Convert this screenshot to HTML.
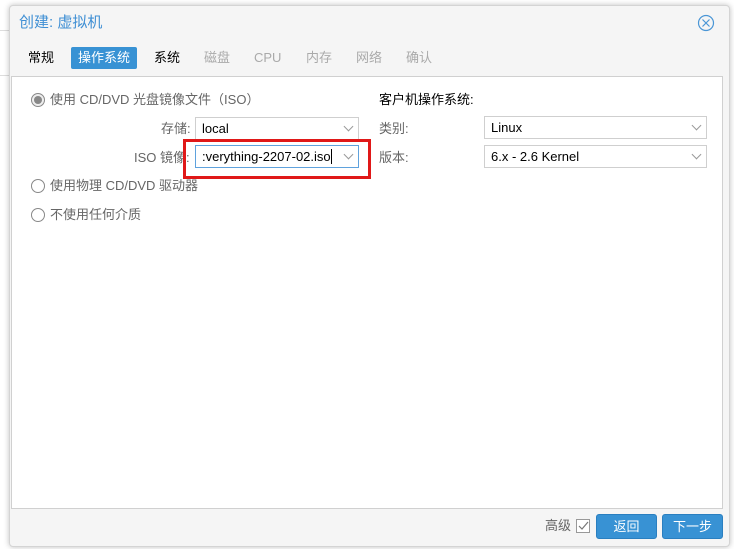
<!DOCTYPE html>
<html><head><meta charset="utf-8"><style>
body{margin:0;width:734px;height:549px;background:#fff;position:relative;overflow:hidden;font-family:"Liberation Sans","Noto Sans CJK SC",sans-serif;font-size:13px;line-height:16px;color:#000}
.a{position:absolute}
.dlg{left:9px;top:5px;width:719px;height:540px;background:#f5f5f5;border:1px solid #d4d4d4;border-radius:4px;box-shadow:0 0 6px rgba(0,0,0,.25)}
.panel{left:11px;top:76px;width:710px;height:431px;background:#fff;border:1px solid #d0d0d0}
.tab{top:50px;font-size:13px}
.inp{height:21px;background:#fff;border:1px solid #cfcfcf;font-size:13px;line-height:21px;padding-left:6px;box-sizing:content-box}
.chev{position:absolute;right:6px;top:5px;width:6px;height:6px;border-right:1px solid #999;border-bottom:1px solid #999;transform:rotate(45deg)}
.lbl{color:#666}
.radio{width:12px;height:12px;border:1px solid #888;border-radius:50%;background:#fff}
.btn{top:514px;height:23px;width:59px;background:#3892d4;border:1px solid #2a7fc0;border-radius:3px;color:#fff;text-align:center;line-height:23px}
</style></head><body>
<div class="a" style="left:0;top:30px;width:9px;height:1px;background:#ddd"></div>
<div class="a" style="left:0;top:75px;width:9px;height:1px;background:#ddd"></div>
<div class="a dlg"></div>
<div class="a" style="left:19px;top:14px;font-size:15px;line-height:18px;color:#3f8fd4">创建: 虚拟机</div>
<svg class="a" style="left:697px;top:14px" width="18" height="18"><circle cx="9" cy="9" r="7.5" fill="none" stroke="#4a96d6" stroke-width="1.2"/><path d="M5.5 5.5L12.5 12.5M12.5 5.5L5.5 12.5" stroke="#4a96d6" stroke-width="1.2"/></svg>
<div class="a tab" style="left:28px">常规</div>
<div class="a" style="left:71px;top:47px;width:66px;height:22px;background:#3892d4;border-radius:2px;color:#fff;text-align:center;line-height:22px">操作系统</div>
<div class="a tab" style="left:154px">系统</div>
<div class="a tab" style="left:204px;color:#aaa">磁盘</div>
<div class="a tab" style="left:254px;color:#aaa">CPU</div>
<div class="a tab" style="left:306px;color:#aaa">内存</div>
<div class="a tab" style="left:356px;color:#aaa">网络</div>
<div class="a tab" style="left:406px;color:#aaa">确认</div>
<div class="a panel"></div>
<div class="a radio" style="left:31px;top:93px;background:#eee"></div>
<div class="a" style="left:34px;top:96px;width:8px;height:8px;border-radius:50%;background:#888"></div>
<div class="a lbl" style="left:50px;top:92px">使用 CD/DVD 光盘镜像文件（ISO）</div>
<div class="a lbl" style="left:161px;top:121px">存储:</div>
<div class="a inp" style="left:195px;top:117px;width:156px">local<span class="chev"></span></div>
<div class="a lbl" style="left:134px;top:150px">ISO 镜像:</div>
<div class="a inp" style="left:195px;top:145px;width:156px;border-color:#5fa2dd;overflow:hidden;white-space:nowrap">:verything-2207-02.iso<span style="display:inline-block;width:1px;height:15px;background:#000;vertical-align:-3px"></span><span class="chev"></span></div>
<div class="a" style="left:183px;top:139px;width:182px;height:34px;border:3px solid #e01818"></div>
<div class="a radio" style="left:31px;top:179px"></div>
<div class="a lbl" style="left:50px;top:178px">使用物理 CD/DVD 驱动器</div>
<div class="a radio" style="left:31px;top:208px"></div>
<div class="a lbl" style="left:50px;top:207px">不使用任何介质</div>
<div class="a" style="left:379px;top:92px">客户机操作系统:</div>
<div class="a lbl" style="left:379px;top:121px">类别:</div>
<div class="a inp" style="left:484px;top:116px;width:215px">Linux<span class="chev"></span></div>
<div class="a lbl" style="left:379px;top:150px">版本:</div>
<div class="a inp" style="left:484px;top:145px;width:215px">6.x - 2.6 Kernel<span class="chev"></span></div>
<div class="a lbl" style="left:545px;top:518px">高级</div>
<div class="a" style="left:576px;top:519px;width:12px;height:12px;border:1px solid #999;background:#fff"></div>
<svg class="a" style="left:577px;top:520px" width="12" height="12"><path d="M2 6L5 9L11 2" fill="none" stroke="#777" stroke-width="1.2"/></svg>
<div class="a btn" style="left:596px">返回</div>
<div class="a btn" style="left:662px">下一步</div>
</body></html>
